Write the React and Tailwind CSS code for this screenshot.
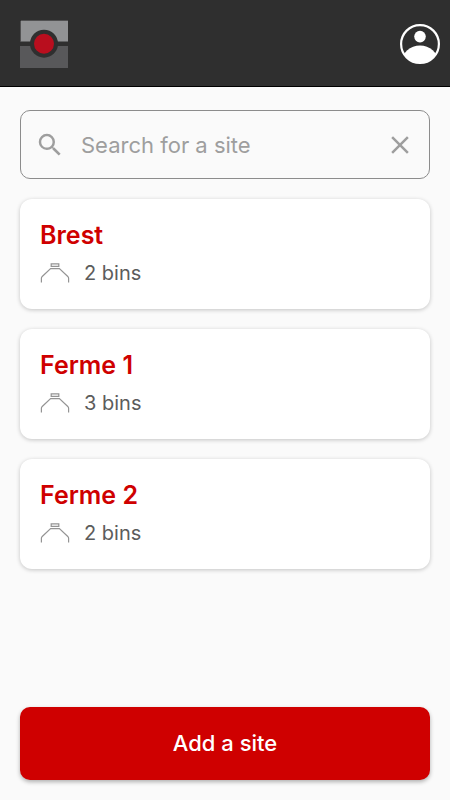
import { useState } from "react";
import { MdClose, MdSearch } from "react-icons/md";

const sites = [
  { id: 1, name: "Brest", bins: 2 },
  { id: 2, name: "Ferme 1", bins: 3 },
  { id: 3, name: "Ferme 2", bins: 2 },
];

const Logo = () => (
  <svg width="48" height="48" viewBox="0 0 48 48" aria-hidden="true">
    <path d="M0 0h48v21.5H0z" fill="#929395" />
    <path d="M0 26h48v22H0z" fill="#58585a" />
    <path d="M0 21.5V0H48" fill="none" stroke="#111111" />
    <circle cx="24" cy="23.7" r="14" fill="#2f2f2f" />
    <circle cx="24" cy="23.7" r="10" fill="#b90e1e" />
  </svg>
);

const AccountIcon = () => (
  <svg width="40" height="40" viewBox="0 0 40 40" aria-hidden="true">
    <defs>
      <clipPath id="account-clip">
        <circle cx="20" cy="20" r="19" />
      </clipPath>
    </defs>
    <circle cx="20" cy="20" r="18.9" fill="none" stroke="#ffffff" strokeWidth="2.2" />
    <circle cx="20" cy="12.6" r="5.8" fill="#ffffff" />
    <ellipse cx="20" cy="38" rx="18" ry="16.5" fill="#ffffff" clipPath="url(#account-clip)" />
  </svg>
);

const BinIcon = () => (
  <svg width="30" height="20" viewBox="0 0 30 20" fill="none" stroke="#949494" strokeWidth="1.2" aria-hidden="true">
    <path d="M11.2 0.8h7.6v2.6h-7.6z" />
    <path d="M1.4 19.6v-4.4q0-1 .8-1.7L10.6 5.6h8.8l8.4 7.9q.8.7.8 1.7v4.4" />
  </svg>
);

const SiteCard = ({ site }) => (
  <li>
    <a
      href={`#site-${site.id}`}
      className="flex h-[110px] flex-col gap-1 rounded-xl bg-white px-5 pt-5 shadow-[0_1px_4px_rgba(0,0,0,0.22)]"
    >
      <h2 className="text-[25px] leading-8 font-semibold text-[#cf0000]">{site.name}</h2>
      <div className="flex items-center gap-[14px]">
        <BinIcon />
        <p className="text-[20px] leading-9 text-[#5c5c5c]">{site.bins} bins</p>
      </div>
    </a>
  </li>
);

const App = () => {
  const [search, setSearch] = useState("");

  const filteredSites = sites.filter((site) =>
    site.name.toLowerCase().includes(search.toLowerCase())
  );

  return (
    <div className="flex min-h-screen flex-col bg-[#fafafa] font-['Inter',sans-serif]">
      <header className="flex h-[87px] items-center justify-between border-b border-black bg-[#2f2f2f] pt-0.5 pr-[10px] pl-5">
        <a href="#home" aria-label="Home">
          <Logo />
        </a>
        <button type="button" aria-label="Account">
          <AccountIcon />
        </button>
      </header>

      <main className="flex flex-1 flex-col gap-5 px-5 pt-[23px] pb-5">
        <div className="flex h-[69px] items-center gap-4 rounded-[10px] border border-[#8c8c8c] px-[14px] text-[#9e9e9e]">
          <MdSearch size={30} className="shrink-0" />
          <input
            type="text"
            aria-label="Search for a site"
            placeholder="Search for a site"
            value={search}
            onChange={(e) => setSearch(e.target.value)}
            className="min-w-0 flex-1 bg-transparent text-[22px] leading-8 text-[#5c5c5c] outline-none placeholder:text-[#9e9e9e]"
          />
          <button type="button" aria-label="Clear search" onClick={() => setSearch("")}>
            <MdClose size={30} />
          </button>
        </div>

        <ul className="flex flex-col gap-5">
          {filteredSites.map((site) => (
            <SiteCard key={site.id} site={site} />
          ))}
        </ul>

        <button
          type="button"
          className="mt-auto h-[73px] rounded-[10px] bg-[#cf0000] text-[22px] font-medium text-white shadow-[0_2px_4px_rgba(0,0,0,0.3)]"
        >
          Add a site
        </button>
      </main>
    </div>
  );
};

export default App;
